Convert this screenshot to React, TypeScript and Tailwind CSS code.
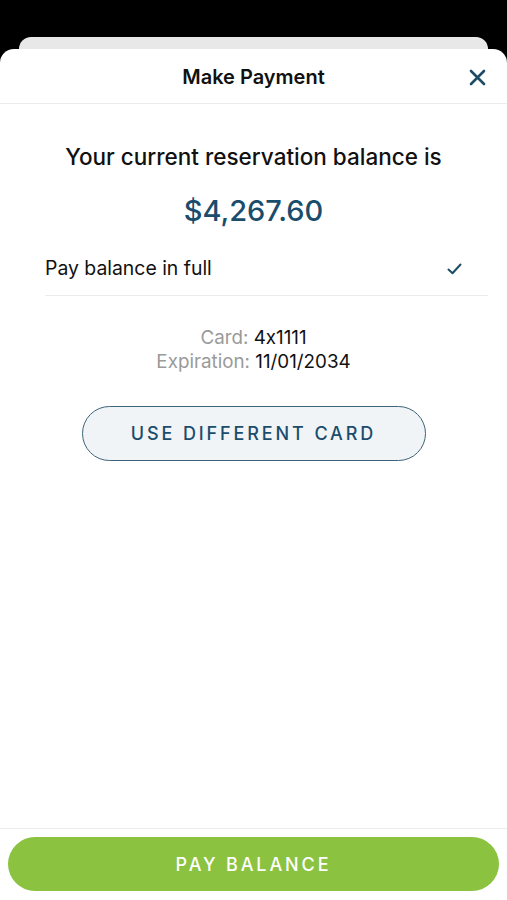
import React from "react";

export default function App() {
  return (
    <div className="w-[507px] h-[900px] bg-black flex flex-col overflow-hidden [font-feature-settings:'calt'_0]" style={{ fontFamily: "Inter, 'Noto Sans', sans-serif" }}>
      <div className="h-[37px] shrink-0" />
      <div className="mx-[19px] h-[24px] shrink-0 rounded-t-[12px] bg-[#e8e8e8]" />
      <div className="-mt-[12px] flex-1 bg-white rounded-t-[14px] flex flex-col">
        <div className="relative h-[55px] shrink-0 flex items-center justify-center border-b border-[#ececec]">
          <span className="mt-[2px] text-[20px] font-semibold text-[#111]">Make Payment</span>
          <svg className="absolute right-[21px] top-[20px]" width="17" height="17" viewBox="0 0 17 17">
            <path d="M2 2 L15 15 M15 2 L2 15" stroke="#1c4c66" strokeWidth="2.6" strokeLinecap="round" />
          </svg>
        </div>
        <div className="flex-1 flex flex-col items-center">
          <div className="mt-[39px] text-[22.5px] leading-[28px] font-medium text-[#111]">Your current reservation balance is</div>
          <div className="mt-[23px] text-[29px] leading-[34px] font-medium text-[#1a4d6b]">$4,267.60</div>
          <div className="mt-[14px] self-stretch ml-[45px] mr-[19px] h-[54px] flex items-center justify-between border-b border-[#ececec]">
            <span className="text-[19.4px] text-[#111]">Pay balance in full</span>
            <svg className="mr-[26px]" width="15" height="12" viewBox="0 0 15 12">
              <path d="M1.5 6.5 L5.5 10.2 L13.5 1.5" stroke="#1c4c66" strokeWidth="2" fill="none" strokeLinecap="round" strokeLinejoin="round" />
            </svg>
          </div>
          <div className="mt-[30px] text-[18.8px] leading-[24px] text-center">
            <div><span className="text-[#9a9a9a]">Card: </span><span className="text-[#111]">4x1111</span></div>
            <div><span className="text-[#9a9a9a]">Expiration: </span><span className="text-[#111]">11/01/2034</span></div>
          </div>
          <button className="mt-[32px] w-[344px] h-[55px] rounded-full border-[1.5px] border-[#3d6378] bg-[#f1f4f7] text-[18px] font-medium tracking-[0.16em] text-[#1a4d6b]">
            USE DIFFERENT CARD
          </button>
        </div>
        <div className="h-[72px] shrink-0 border-t border-[#ececec] flex items-start justify-center pt-[8px]">
          <button className="w-[491px] h-[54px] rounded-full bg-[#8bc240] text-white text-[18px] font-medium tracking-[0.16em]">
            PAY BALANCE
          </button>
        </div>
      </div>
    </div>
  );
}
